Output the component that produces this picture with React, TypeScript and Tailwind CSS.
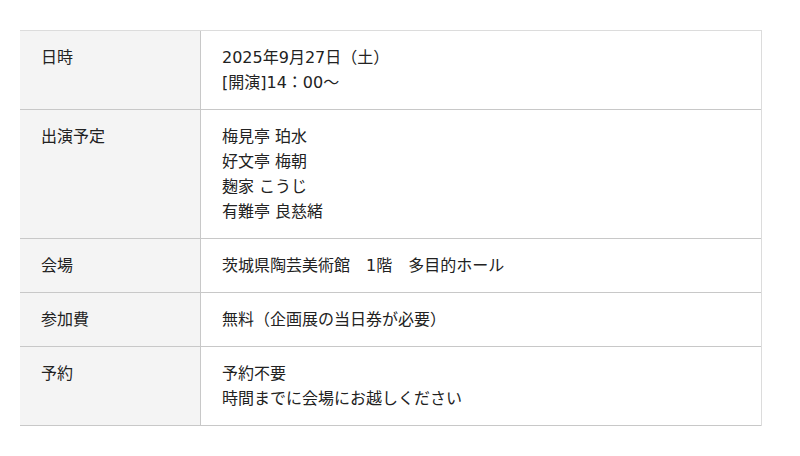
import React from 'react';

const rows: { label: string; lines: string[] }[] = [
  { label: '日時', lines: ['2025年9月27日（土）', '[開演]14：00～'] },
  { label: '出演予定', lines: ['梅見亭 珀水', '好文亭 梅朝', '麹家 こうじ', '有難亭 良慈緒'] },
  { label: '会場', lines: ['茨城県陶芸美術館　1階　多目的ホール'] },
  { label: '参加費', lines: ['無料（企画展の当日券が必要）'] },
  { label: '予約', lines: ['予約不要', '時間までに会場にお越しください'] },
];

const App: React.FC = () => {
  return (
    <div className="min-h-screen bg-white pt-[30px] pl-[20px] font-['DejaVu_Sans','Noto_Sans_CJK_JP',sans-serif]">
      <div className="w-[742px] border-t border-r border-[#dcdcdc] text-[16px] leading-[25px] text-[#222]">
        {rows.map((row) => (
          <div key={row.label} className="flex border-b border-[#c8c8c8]">
            <div className="w-[181px] shrink-0 bg-[#f4f4f4] border-r border-[#c8c8c8] px-[21px] py-[14px]">
              {row.label}
            </div>
            <div className="flex-1 px-[21px] py-[14px]">
              {row.lines.map((line) => (
                <div key={line}>{line}</div>
              ))}
            </div>
          </div>
        ))}
      </div>
    </div>
  );
};

export default App;
